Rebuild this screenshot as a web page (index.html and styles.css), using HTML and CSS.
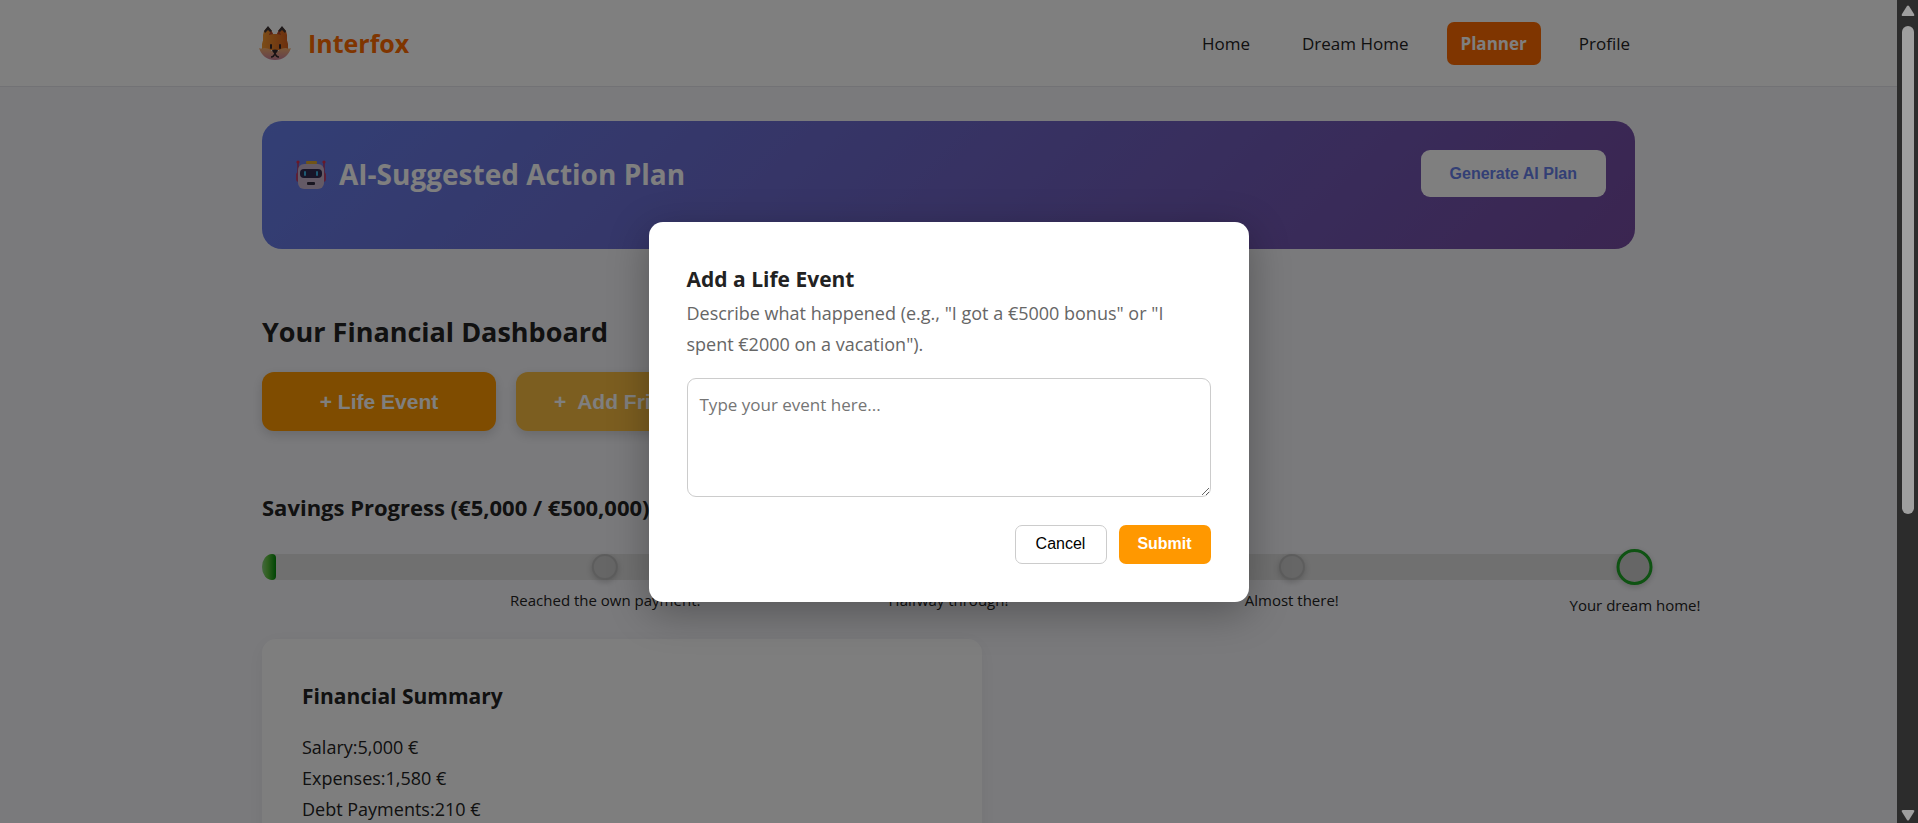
FILE: index.html
```html
<!DOCTYPE html>
<html lang="en">
<head>
  <meta charset="UTF-8">
  <meta name="viewport" content="width=device-width, initial-scale=1.0">
  <title>Interfox - Planner</title>
  <link rel="stylesheet" href="styles.css">
</head>
<body>
  <div class="page">
    <header class="header">
      <nav class="navbar">
        <a href="#" class="logo">
          <svg class="logo-icon" viewBox="0 0 34 34" aria-hidden="true">
            <defs>
              <linearGradient id="foxFace" x1="0" y1="0" x2="1" y2="0">
                <stop offset="0" stop-color="#f7992e"/>
                <stop offset="1" stop-color="#d9601e"/>
              </linearGradient>
              <linearGradient id="foxCheek" x1="0" y1="0" x2="0" y2="1">
                <stop offset="0" stop-color="#f5b070"/>
                <stop offset="1" stop-color="#c9809a"/>
              </linearGradient>
            </defs>
            <path fill="url(#foxFace)" d="M5 20V9L6 5Q10 -1 13 4L15 8H19L21 4Q24 -1 28 5L29 9V20Z"/>
            <path fill="#b5442c" d="M11 9 13 4 15 8 13 11ZM23 9 21 4 19 8 21 11Z"/>
            <path fill="#3d3436" d="M6 5 10 0 14 5 12 6 10 4 7 7ZM28 5 24 0 20 5 22 6 24 4 27 7Z"/>
            <path fill="url(#foxFace)" d="M4 24V18C5 11 11 8 17 8S29 11 30 18V24Z"/>
            <path fill="url(#foxCheek)" d="M1 22Q3 23 6 22Q11 22 14 25Q17 27 20 25Q23 22 28 22Q31 23 33 22Q29 34 17 34T1 22Z"/>
            <rect x="12" y="18" width="2" height="5" rx="1" fill="#33262a"/>
            <rect x="21" y="18" width="2" height="5" rx="1" fill="#33262a"/>
            <path fill="#33262a" d="M14 24Q17 23 20 24Q20 26 17 28Q14 26 14 24Z"/>
            <path fill="none" stroke="#33262a" stroke-width="1.4" d="M13 31Q16 31 17 27Q18 31 21 31"/>
          </svg>
          <span>Interfox</span>
        </a>
        <div class="nav-links">
          <a href="#">Home</a>
          <a href="#">Dream Home</a>
          <a href="#" class="active">Planner</a>
          <a href="#">Profile</a>
        </div>
      </nav>
    </header>

    <main class="container">
      <section class="ai-banner">
        <h2 class="ai-title">
          <svg class="robot-icon" viewBox="0 0 32 30" aria-hidden="true">
            <path stroke="#b03a68" stroke-width="1.5" d="M3 2V18M29 2V18"/>
            <circle cx="3" cy="2" r="1.6" fill="#d8304e"/>
            <circle cx="29" cy="2" r="1.6" fill="#d8304e"/>
            <rect x="1" y="12" width="30" height="10" rx="3" fill="#b8406e"/>
            <rect x="3" y="4" width="26" height="25" rx="6" fill="#c8b4cc"/>
            <rect x="11" y="1" width="11" height="3" rx="1" fill="#e0a82e"/>
            <rect x="5" y="9" width="22" height="9" rx="4" fill="#302a50"/>
            <rect x="9" y="11" width="2" height="5" rx="1" fill="#3db4e6"/>
            <rect x="21" y="11" width="2" height="5" rx="1" fill="#3db4e6"/>
            <rect x="12" y="22" width="8" height="3" rx="1" fill="#302a40"/>
          </svg>
          <span>AI-Suggested Action Plan</span>
        </h2>
        <button type="button" class="generate-btn">Generate AI Plan</button>
      </section>

      <h2 class="dashboard-title">Your Financial Dashboard</h2>
      <div class="actions">
        <button type="button" class="action-btn life">+ Life Event</button>
        <button type="button" class="action-btn friend">+&nbsp; Add Friends</button>
      </div>

      <section class="savings">
        <h3>Savings Progress (€5,000 / €500,000)</h3>
        <div class="progress">
          <div class="progress-fill" style="width: 1%"></div>
          <div class="milestone" style="left: 25%">
            <span class="dot"></span>
            <span class="label">Reached the own payment.</span>
          </div>
          <div class="milestone" style="left: 50%">
            <span class="dot"></span>
            <span class="label">Halfway through!</span>
          </div>
          <div class="milestone" style="left: 75%">
            <span class="dot"></span>
            <span class="label">Almost there!</span>
          </div>
          <div class="milestone goal" style="left: 100%">
            <span class="dot"></span>
            <span class="label">Your dream home!</span>
          </div>
        </div>
      </section>

      <section class="card">
        <h3>Financial Summary</h3>
        <p>Salary:5,000 €</p>
        <p>Expenses:1,580 €</p>
        <p>Debt Payments:210 €</p>
      </section>
    </main>

    <div class="modal-overlay">
      <form class="modal" role="dialog" aria-labelledby="eventTitle">
        <h3 id="eventTitle">Add a Life Event</h3>
        <label for="eventText">Describe what happened (e.g., "I got a €5000 bonus" or "I spent €2000 on a vacation").</label>
        <textarea id="eventText" placeholder="Type your event here..."></textarea>
        <div class="modal-actions">
          <button type="button" class="cancel-btn">Cancel</button>
          <button type="submit" class="submit-btn">Submit</button>
        </div>
      </form>
    </div>
  </div>

  <div class="scrollbar" aria-hidden="true">
    <svg class="arrow" viewBox="0 0 14 12"><path d="M6 1Q7 0 8 1L13 9Q14 11 12 11H2Q0 11 1 9Z"/></svg>
    <div class="track"><div class="thumb"></div></div>
    <svg class="arrow" viewBox="0 0 14 12"><path d="M6 11Q7 12 8 11L13 3Q14 1 12 1H2Q0 1 1 3Z"/></svg>
  </div>
</body>
</html>
```
FILE: styles.css
```css
* {
  box-sizing: border-box;
  margin: 0;
  padding: 0;
}
body {
  display: flex;
  height: 100vh;
  overflow: hidden;
  font-family: 'Segoe UI', 'Open Sans', sans-serif;
  font-size: 18px;
  line-height: 31px;
  color: #222;
}
button {
  font-family: Arial, 'Liberation Sans', sans-serif;
  font-size: 16px;
  font-weight: bold;
  border: none;
  cursor: pointer;
}
h3 {
  font-size: 21px;
  line-height: 38px;
}
.page {
  position: relative;
  flex: 1;
  height: 100%;
  overflow: hidden;
  background: #f5f5f9;
}

/* header */
.header {
  background: white;
  border-bottom: 1px solid #e5e5ea;
}
.navbar {
  display: flex;
  justify-content: space-between;
  align-items: center;
  max-width: 1391px;
  height: 86px;
  margin: 0 auto;
}
.logo {
  display: flex;
  align-items: center;
  gap: 16px;
  padding-left: 5px;
  color: #ff6b00;
  font-size: 25px;
  font-weight: bold;
  text-decoration: none;
}
.logo-icon {
  width: 34px;
  height: 34px;
}
.nav-links {
  display: flex;
  gap: 24px;
}
.nav-links a {
  padding: 6px 14px;
  border-radius: 7px;
  color: #222;
  font-size: 17px;
  text-decoration: none;
}
.nav-links .active {
  background: #ff6b00;
  color: white;
  font-weight: bold;
}

/* content */
.container {
  max-width: 1373px;
  margin: 34px auto 0;
}
.ai-banner {
  display: flex;
  justify-content: space-between;
  align-items: flex-start;
  min-height: 128px;
  padding: 29px;
  border-radius: 20px;
  background: linear-gradient(135deg, #667eea 0%, #764ba2 100%);
}
.ai-title {
  display: flex;
  align-items: center;
  gap: 12px;
  padding-left: 4px;
  color: white;
  font-size: 28px;
  line-height: 49px;
}
.robot-icon {
  width: 32px;
  height: 30px;
}
.generate-btn {
  height: 47px;
  padding: 0 29px;
  border-radius: 9px;
  background: white;
  color: #667eea;
}
.dashboard-title {
  margin: 58px 0 16px;
  font-size: 27px;
  line-height: 49px;
}
.actions {
  display: flex;
  gap: 20px;
}
.action-btn {
  min-width: 234px;
  height: 59px;
  padding: 0 38px;
  border-radius: 12px;
  color: white;
  font-size: 21px;
  box-shadow: 0 4px 12px rgba(0, 0, 0, 0.15);
}
.life { background: #ff9800; }
.friend {
  background: #f8bc40;
  text-align: left;
}

/* savings bar */
.savings {
  margin-top: 57px;
}
.savings h3 {
  font-size: 22px;
}
.progress {
  position: relative;
  height: 26px;
  margin: 28px 0 59px;
  border-radius: 13px;
  background: #e0e0e0;
}
.progress-fill {
  height: 26px;
  border-radius: 10px 4px 4px 10px / 13px 4px 4px 13px;
  background: linear-gradient(90deg, #8ad080, #60c040 40%, #008a08);
}
.milestone {
  position: absolute;
  top: 0;
  display: flex;
  flex-direction: column;
  align-items: center;
  gap: 7px;
  transform: translateX(-50%);
}
.milestone .dot {
  width: 26px;
  height: 26px;
  border: 2px solid #bbb;
  border-radius: 50%;
  background: #ccc;
  box-shadow: 0 2px 6px rgba(0, 0, 0, 0.2);
}
.milestone .label {
  font-size: 15px;
  line-height: 27px;
  white-space: nowrap;
}
.goal {
  top: -5px;
}
.goal .dot {
  width: 36px;
  height: 36px;
  border: 3px solid #1ea626;
}

.card {
  max-width: 720px;
  padding: 38px 40px;
  border-radius: 14px;
  background: #fdfdfd;
  box-shadow: 0 4px 20px rgba(0, 0, 0, 0.06);
}
.card h3 {
  margin-bottom: 17px;
}

/* modal */
.modal-overlay {
  position: absolute;
  inset: 0;
  display: flex;
  justify-content: center;
  align-items: center;
  background: rgba(0, 0, 0, 0.5);
}
.modal {
  width: 600px;
  padding: 38px;
  border-radius: 14px;
  background: white;
  box-shadow: 0 10px 40px rgba(0, 0, 0, 0.3);
}
.modal label {
  display: block;
  color: #666;
}
.modal textarea {
  display: block;
  width: 100%;
  height: 119px;
  margin: 18px 0 28px;
  padding: 12px;
  border: 1px solid #ccc;
  border-radius: 9px;
  font-family: inherit;
  font-size: 17px;
  line-height: 28px;
  resize: vertical;
}
.modal-actions {
  display: flex;
  justify-content: flex-end;
  gap: 12px;
}
.cancel-btn, .submit-btn {
  width: 92px;
  height: 39px;
  border-radius: 7px;
}
.cancel-btn {
  border: 1px solid #ccc;
  background: white;
  font-weight: normal;
}
.submit-btn {
  background: #ff9800;
  color: white;
}

/* scrollbar */
.scrollbar {
  display: flex;
  flex-direction: column;
  align-items: center;
  width: 21px;
  padding: 5px 0 2px;
  background: #2c2c2c;
}
.arrow {
  width: 14px;
  height: 12px;
  fill: #9f9f9f;
}
.track {
  flex: 1;
  padding: 9px 0;
}
.thumb {
  width: 12px;
  height: 63%;
  border-radius: 6px;
  background: #9f9f9f;
}
```
